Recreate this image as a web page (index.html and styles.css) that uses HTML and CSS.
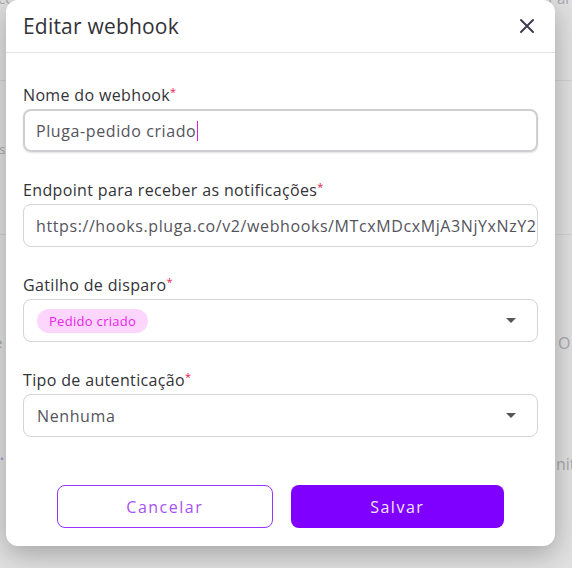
FILE: index.html
```html
<!DOCTYPE html>
<html lang="pt-BR">
<head>
<meta charset="utf-8">
<title>Editar webhook</title>
<link rel="stylesheet" href="styles.css">
</head>
<body>
<div class="backdrop">
  <span class="bg-text bg-t1">ce</span>
  <span class="bg-text bg-t2">Pare</span>
  <span class="bg-text bg-t3">es</span>
  <span class="bg-text bg-t4">e</span>
  <span class="bg-text bg-t5">O</span>
  <span class="bg-text bg-t6">•</span>
  <span class="bg-text bg-t7">nit</span>
  <div class="bg-band bg-b1"></div>
  <div class="bg-band bg-b2"></div>
</div>
<div class="modal">
  <header class="modal-header">
    <h1 class="modal-title">Editar webhook</h1>
    <button class="close-btn" aria-label="Fechar">
      <svg width="16" height="16" viewBox="0 0 16 16"><path d="M2 2 L14 14 M14 2 L2 14" stroke="#3d3d50" stroke-width="2" stroke-linecap="round"/></svg>
    </button>
  </header>
  <div class="modal-body">
    <div class="field">
      <label class="label">Nome do webhook<span class="req">*</span></label>
      <div class="input focused"><span class="value">Pluga-pedido criado</span><span class="caret"></span></div>
    </div>
    <div class="field">
      <label class="label">Endpoint para receber as notificações<span class="req">*</span></label>
      <div class="input"><span class="value">https://hooks.pluga.co/v2/webhooks/MTcxMDcxMjA3NjYxNzY2</span></div>
    </div>
    <div class="field">
      <label class="label">Gatilho de disparo<span class="req">*</span></label>
      <div class="input select"><span class="chip">Pedido criado</span><span class="arrow"></span></div>
    </div>
    <div class="field">
      <label class="label">Tipo de autenticação<span class="req">*</span></label>
      <div class="input select"><span class="value">Nenhuma</span><span class="arrow"></span></div>
    </div>
  </div>
  <footer class="modal-footer">
    <button class="btn btn-outline">Cancelar</button>
    <button class="btn btn-primary">Salvar</button>
  </footer>
</div>
</body>
</html>
```
FILE: styles.css
```css
* { box-sizing: border-box; }
html, body {
  margin: 0;
  padding: 0;
  width: 572px;
  height: 568px;
  overflow: hidden;
}
body {
  background: #dcdcdc;
  font-family: "Open Sans", "Liberation Sans", sans-serif;
  position: relative;
}
.backdrop {
  position: absolute;
  inset: 0;
  background: #e1e1e1;
}
.bg-text {
  position: absolute;
  color: #a8a8b0;
  font-size: 15px;
  font-family: "Open Sans", sans-serif;
}
.bg-t1 { left: -2px; top: -12px; }
.bg-t2 { left: 548px; top: -12px; }
.bg-t3 { left: -8px; top: 140px; font-size: 13px; }
.bg-t4 { left: -6px; top: 332px; }
.bg-t5 { left: 558px; top: 332px; font-size: 16px; }
.bg-t6 { left: 0px; top: 452px; font-size: 10px; color: #9a8fd0; }
.bg-t7 { left: 556px; top: 453px; font-size: 16px; }
.bg-band {
  position: absolute;
  left: 0;
  right: 0;
  height: 1px;
  background: #d2d2d2;
}
.bg-b1 { top: 80px; }
.bg-b2 { top: 234px; }

.modal {
  position: absolute;
  left: 6px;
  top: 0;
  width: 549px;
  height: 546px;
  background: #fff;
  border-radius: 12px;
  box-shadow: 0 8px 28px rgba(0,0,0,0.28);
  display: flex;
  flex-direction: column;
}
.modal-header {
  height: 53px;
  border-bottom: 1px solid #e3e3e6;
  display: flex;
  align-items: center;
  justify-content: space-between;
  padding: 0 20px 0 17px;
}
.modal-title {
  margin: 0;
  font-size: 21px;
  font-weight: 500;
  color: #323238;
  letter-spacing: 0.2px;
}
.close-btn {
  border: 0;
  background: transparent;
  padding: 0;
  width: 16px;
  height: 16px;
  display: flex;
}
.modal-body {
  padding: 33px 17px 0 17px;
  display: flex;
  flex-direction: column;
  gap: 29px;
}
.field {
  display: flex;
  flex-direction: column;
  gap: 5px;
}
.label {
  font-size: 16px;
  line-height: 18px;
  font-weight: 500;
  color: #333338;
  letter-spacing: 0.35px;
}
.req {
  color: #e8194f;
  font-size: 11px;
  vertical-align: top;
  line-height: 12px;
  letter-spacing: 0;
}
.input {
  height: 43px;
  border: 1px solid #d3d3d8;
  border-radius: 8px;
  display: flex;
  align-items: center;
  padding: 0 12px;
  font-size: 16px;
  letter-spacing: 0.6px;
  color: #54545c;
  overflow: hidden;
  white-space: nowrap;
}
.input.focused {
  border: 2px solid #cfcfd3;
  padding: 0 11px;
  box-shadow: 0 1px 2px rgba(0,0,0,0.12);
}
.caret {
  display: inline-block;
  width: 1px;
  height: 20px;
  background: #e020e0;
  margin-left: 1px;
}
.select {
  justify-content: space-between;
  padding: 0 21px 0 13px;
}
.chip {
  background: #fcd6fc;
  color: #e91ee9;
  font-size: 13px;
  font-weight: 500;
  letter-spacing: 0.3px;
  border-radius: 12px;
  height: 24px;
  line-height: 24px;
  padding: 0 12px;
}
.arrow {
  width: 0;
  height: 0;
  border-left: 5px solid transparent;
  border-right: 5px solid transparent;
  border-top: 5px solid #55555c;
}
.modal-footer {
  margin-top: auto;
  padding: 0 51px 18px 51px;
  display: flex;
  gap: 18px;
}
.btn {
  flex: 1;
  height: 43px;
  border-radius: 8px;
  font-family: "Open Sans", sans-serif;
  font-size: 16px;
  font-weight: 500;
  letter-spacing: 1.5px;
  cursor: pointer;
}
.btn-outline {
  background: #fff;
  border: 1.5px solid #9a33ff;
  color: #a852f5;
}
.btn-primary {
  background: #8000ff;
  border: 0;
  color: #f1e6ff;
}
```
